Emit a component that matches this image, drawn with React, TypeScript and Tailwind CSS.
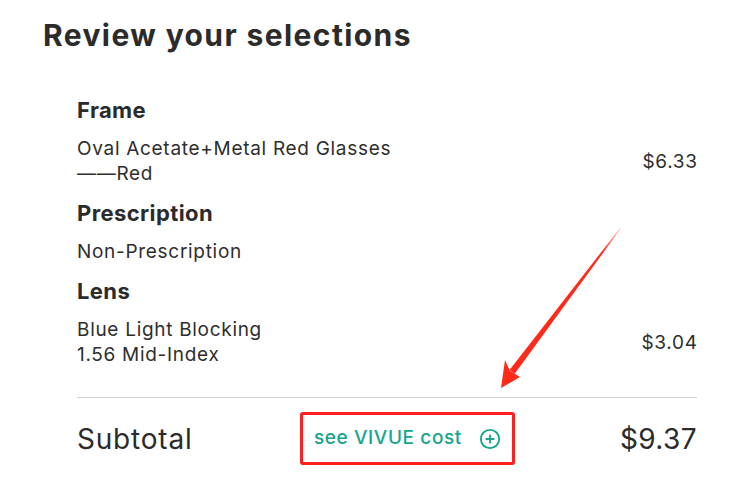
import { CirclePlus } from "lucide-react";

function Section({ title, children }: { title: string; children: React.ReactNode }) {
  return (
    <div>
      <h3 className="text-[22px] font-bold leading-[28px] tracking-[0.4px] text-[#2b2b2b]">{title}</h3>
      <div className="mt-[12px] mb-[13px]">{children}</div>
    </div>
  );
}

function Item({ lines, price }: { lines: string[]; price?: string }) {
  return (
    <div className="flex items-center justify-between text-[19px] leading-[25px] tracking-[0.7px] text-[#2e2e2e]">
      <div>
        {lines.map((l) => (
          <p key={l}>{l}</p>
        ))}
      </div>
      {price && <span className="-mr-[0.7px]">{price}</span>}
    </div>
  );
}

export default function App() {
  return (
    <div
      className="relative h-[481px] w-[751px] bg-white pl-[43px] pr-[54px] pt-[15px]"
      style={{ fontFamily: "Inter, 'Liberation Sans', sans-serif" }}
    >
      <h2 className="text-[30px] font-bold leading-[40px] tracking-[1.4px] text-[#2b2b2b]">Review your selections</h2>

      <div className="mt-[41px] pl-[34px]">
        <Section title="Frame">
          <Item lines={["Oval Acetate+Metal Red Glasses", "——Red"]} price="$6.33" />
        </Section>
        <Section title="Prescription">
          <Item lines={["Non-Prescription"]} />
        </Section>
        <Section title="Lens">
          <Item lines={["Blue Light Blocking", "1.56 Mid-Index"]} price="$3.04" />
        </Section>

        <div className="mt-[30px] border-t border-[#cfcfcf]" />

        <div className="flex items-center pt-[14px]">
          <span className="w-[223px] text-[28px] tracking-[0.8px] text-[#2b2b2b]">Subtotal</span>
          <div className="flex h-[53px] w-[215px] items-center rounded-[3px] border-[3px] border-[#ff1f1f] pl-[11px]">
            <span className="text-[19px] font-medium tracking-[0.6px] text-[#17a58c]">see VIVUE cost</span>
            <CirclePlus className="ml-[17px] h-[22px] w-[22px] text-[#17a58c]" strokeWidth={2} />
          </div>
          <span className="ml-auto text-[28px] tracking-[0.4px] text-[#2b2b2b]">$9.37</span>
        </div>
      </div>

      <svg className="pointer-events-none absolute left-0 top-0" width="751" height="481" viewBox="0 0 751 481">
        <defs>
          <linearGradient id="fade" x1="620" y1="228" x2="500" y2="388" gradientUnits="userSpaceOnUse">
            <stop offset="0" stopColor="#ff2a1a" stopOpacity="0.2" />
            <stop offset="0.15" stopColor="#ff2a1a" />
            <stop offset="1" stopColor="#ff2a1a" />
          </linearGradient>
        </defs>
        <polygon points="620,228 620.6,229 514.5,374 509.5,370" fill="url(#fade)" />
        <polygon points="501,388 505,360 510,371 520,377" fill="#ff2a1a" />
      </svg>
    </div>
  );
}
